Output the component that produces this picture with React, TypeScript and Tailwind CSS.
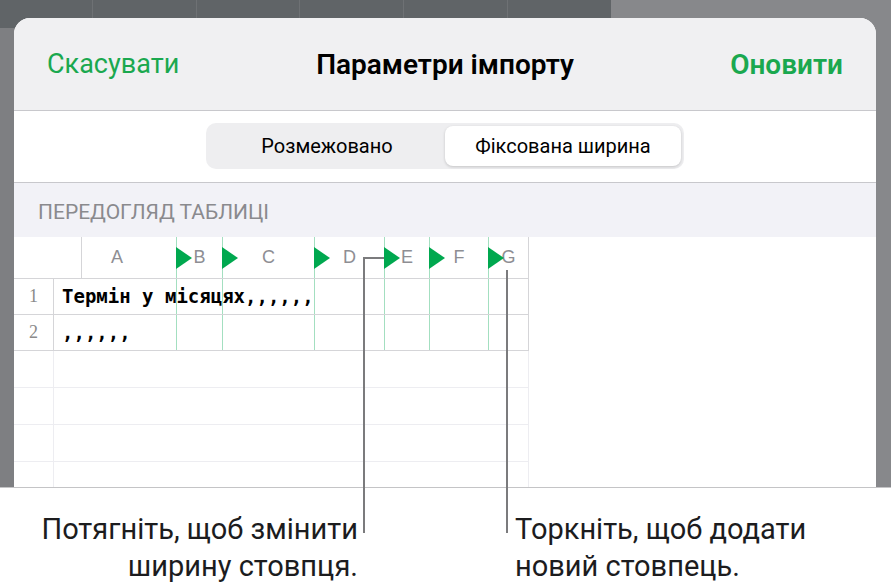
import React from "react";

type Col = { key: string; width: string };

const columns: Col[] = [
  { key: "B", width: "w-[46px]" },
  { key: "C", width: "w-[92px]" },
  { key: "D", width: "w-[70px]" },
  { key: "E", width: "w-[45px]" },
  { key: "F", width: "w-[59px]" },
  { key: "G", width: "w-[40px]" },
];

function Marker() {
  return (
    <svg
      width="16"
      height="22"
      viewBox="0 0 16 22"
      className="absolute left-[-1px] top-[10px]"
    >
      <path d="M0 0 L16 11 L0 22 Z" fill="#00a84f" />
    </svg>
  );
}

function HeaderRow() {
  return (
    <div className="flex h-[42px] shrink-0 border-b border-[#d5d5d8]">
      <div className="w-[68px] shrink-0 border-r border-[#d5d5d8]" />
      <div className="flex w-[94px] shrink-0 items-center pl-[29px] text-[18px] text-[#8e8e93] font-['Liberation_Sans',Arial,sans-serif]">
        A
      </div>
      {columns.map((c) => (
        <div
          key={c.key}
          className={`relative flex shrink-0 items-center justify-center border-l border-[#a3dfc0] text-[18px] text-[#8e8e93] font-['Liberation_Sans',Arial,sans-serif] ${c.width}`}
        >
          <Marker />
          {c.key}
        </div>
      ))}
      <div className="w-px shrink-0 bg-[#d5d5d8]" />
    </div>
  );
}

function DataRow({ num, text }: { num: string; text: string }) {
  return (
    <div className="flex h-[36px] shrink-0 border-b border-[#d5d5d8]">
      <div className="flex w-[40px] shrink-0 items-center justify-center border-r border-[#d5d5d8] text-[18px] text-[#8a8a8a] font-['Liberation_Serif','Times_New_Roman',serif]">
        {num}
      </div>
      <div className="flex w-[122px] shrink-0 items-center whitespace-nowrap pl-[8px] text-[19px] font-bold text-black font-['DejaVu_Sans_Mono',monospace]">
        {text}
      </div>
      {columns.map((c) => (
        <div
          key={c.key}
          className={`shrink-0 border-l border-[#a3dfc0] ${c.width}`}
        />
      ))}
      <div className="w-px shrink-0 bg-[#d5d5d8]" />
    </div>
  );
}

function EmptyRow() {
  return (
    <div className="flex h-[37px] shrink-0 border-b border-[#ededf1]">
      <div className="w-[40px] shrink-0 border-r border-[#ededf1]" />
      <div className="w-[474px] shrink-0" />
      <div className="w-px shrink-0 bg-[#ededf1]" />
    </div>
  );
}

function Sheet() {
  return (
    <div className="absolute left-[14px] top-[18px] flex h-[469px] w-[862px] flex-col overflow-hidden rounded-t-[16px] bg-white">
      {/* navigation bar */}
      <div className="grid h-[93px] shrink-0 grid-cols-[1fr_auto_1fr] items-center border-b border-[#c8c8cc] bg-[#f0f0f2] px-[33px] pt-[1px]">
        <span className="justify-self-start text-[27px] text-[#1aa84f]">Скасувати</span>
        <span className="text-[28px] font-semibold text-black">Параметри імпорту</span>
        <span className="justify-self-end text-[28px] font-semibold text-[#1aa84f]">Оновити</span>
      </div>

      {/* delimiter mode */}
      <div className="flex h-[72px] shrink-0 justify-center border-b border-[#c8c8cc] pt-[12px]">
        <div className="flex h-[46px] w-[478px] rounded-[10px] bg-[#eeeef0] p-[3px] text-[20px] text-black">
          <div className="flex flex-1 items-center justify-center">
            Розмежовано
          </div>
          <div className="flex flex-1 items-center justify-center rounded-[8px] bg-white shadow-[0_1px_3px_rgba(0,0,0,0.18)]">
            Фіксована ширина
          </div>
        </div>
      </div>

      {/* section title */}
      <div className="flex h-[54px] shrink-0 items-center bg-[#f2f2f7] pl-[24px] pt-[6px] text-[21px] text-[#8a8a8e]">
        ПЕРЕДОГЛЯД ТАБЛИЦІ
      </div>

      {/* preview grid */}
      <div className="flex flex-1 flex-col overflow-hidden bg-white">
        <div className="flex w-[515px] flex-col">
          <HeaderRow />
          <DataRow num="1" text="Термін у місяцях,,,,,," />
          <DataRow num="2" text=",,,,,," />
          <EmptyRow />
          <EmptyRow />
          <EmptyRow />
          <EmptyRow />
        </div>
      </div>
    </div>
  );
}

function Backdrop() {
  return (
    <div className="flex h-[487px] flex-col">
      <div className="flex h-[28px] shrink-0">
        <div className="flex w-[611px] bg-[#606467]">
          <div className="w-[93px] border-r border-[#6e7174]" />
          <div className="w-[104px] border-r border-[#6e7174]" />
          <div className="w-[103px] border-r border-[#6e7174]" />
          <div className="w-[104px] border-r border-[#6e7174]" />
          <div className="w-[104px] border-r border-[#6e7174]" />
        </div>
        <div className="flex-1 bg-[#87888b]" />
      </div>
      <div className="flex flex-1">
        <div className="w-[14px] bg-[#7e7f82]" />
        <div className="flex-1 bg-[#7e7f82]" />
        <div className="w-[15px] bg-[#87888b]" />
      </div>
    </div>
  );
}

export default function App() {
  return (
    <div className="relative h-[588px] w-[891px] overflow-hidden bg-white font-['Roboto','Noto_Sans',sans-serif]">
      <Backdrop />
      <div className="h-px bg-[#c4c4c6]" />
      <Sheet />

      {/* callouts */}
      <div className="flex pt-[23px] text-[29px] leading-[37px] text-[#1c1c1e]">
        <div className="w-[358px] text-right">
          Потягніть, щоб змінити
          <br />
          ширину стовпця.
        </div>
        <div className="ml-[157px]">
          Торкніть, щоб додати
          <br />
          новий стовпець.
        </div>
      </div>

      <svg
        className="pointer-events-none absolute left-0 top-0"
        width="891"
        height="588"
        viewBox="0 0 891 588"
      >
        <polyline
          points="384,258 364,258 364,533"
          fill="none"
          stroke="#7b7b7d"
          strokeWidth="2"
        />
        <line x1="507" y1="270" x2="507" y2="533" stroke="#7b7b7d" strokeWidth="2" />
      </svg>
    </div>
  );
}
